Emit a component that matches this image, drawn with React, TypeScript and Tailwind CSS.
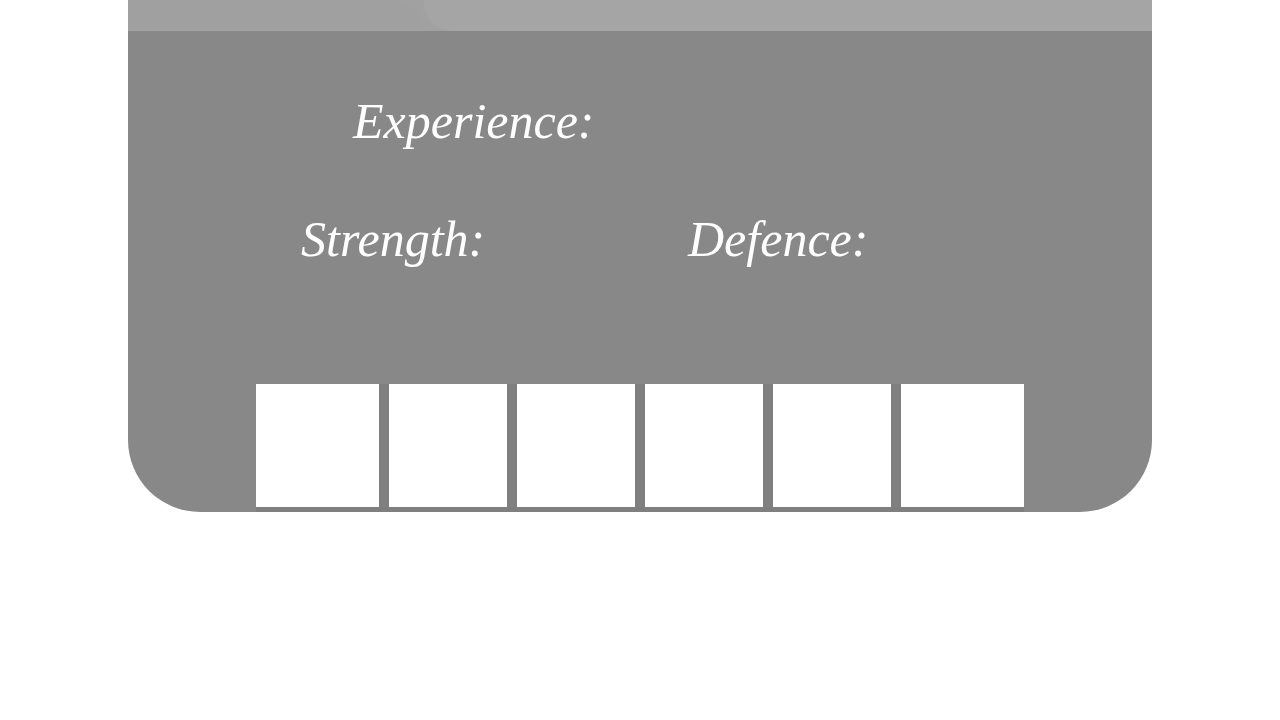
const boxes = [
  'w-[123px]',
  'w-[118px]',
  'w-[118px]',
  'w-[118px]',
  'w-[118px]',
  'w-[123px]',
];

function StatLabel({ text, className }: { text: string; className?: string }) {
  return (
    <p
      className={`text-[50px] leading-none italic text-white whitespace-nowrap ${className ?? ''}`}
      style={{ fontFamily: '"Liberation Serif", "Times New Roman", serif' }}
    >
      {text}
    </p>
  );
}

export default function App() {
  return (
    <div className="w-[1280px] h-[720px] bg-white overflow-hidden">
      <div className="mx-auto w-[1024px] h-[512px] bg-[#888888] rounded-b-[72px] overflow-hidden flex flex-col">
        <div className="h-[31px] bg-[#a1a1a1] flex shrink-0">
          <div className="w-[296px] rounded-tr-[40px] bg-[#a0a0a0]" />
          <div className="flex-1 rounded-bl-[28px] bg-[#a5a5a5]" />
        </div>

        <div className="pl-[225px] mt-[65px]">
          <StatLabel text="Experience:" />
        </div>

        <div className="flex mt-[68px]">
          <StatLabel text="Strength:" className="ml-[173px] w-[387px]" />
          <StatLabel text="Defence:" />
        </div>

        <div className="flex-1" />

        <div className="mx-[128px] h-[128px] bg-[#7f7f7f] flex gap-[10px] pb-[5px]">
          {boxes.map((w, i) => (
            <div key={i} className={`${w} h-full bg-white`} />
          ))}
        </div>
      </div>
    </div>
  );
}
